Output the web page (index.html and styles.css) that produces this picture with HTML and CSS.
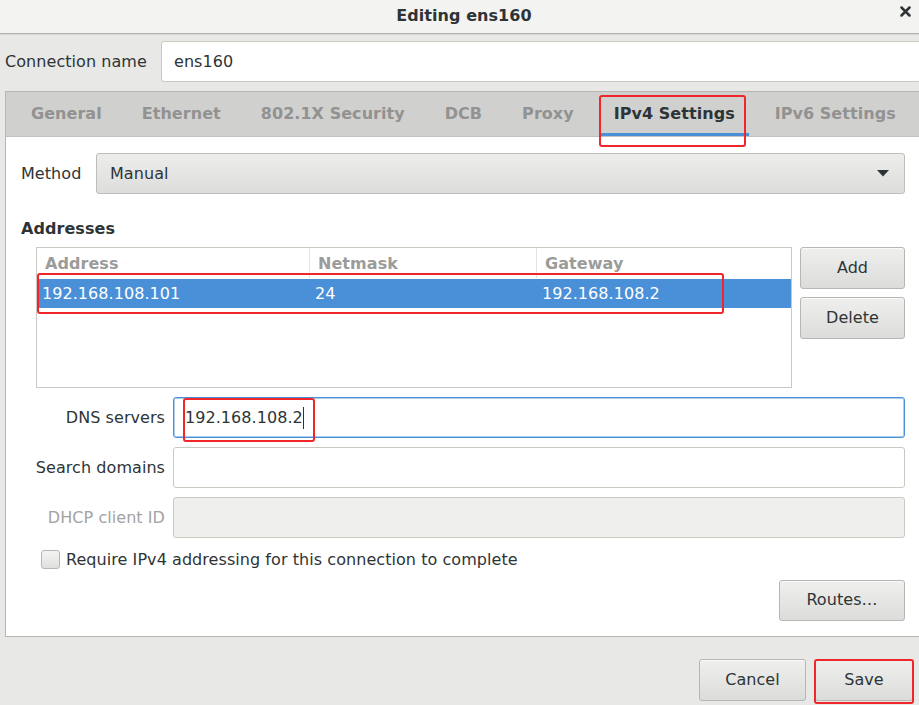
FILE: index.html
```html
<!DOCTYPE html>
<html lang="en">
<head>
  <meta charset="UTF-8">
  <title>Editing ens160</title>
  <link rel="stylesheet" href="styles.css">
</head>
<body>
  <div class="titlebar">
    <span class="title">Editing ens160</span>
    <svg class="close" width="11" height="11" viewBox="0 0 11 11">
      <path d="M1.5 1.5 L9.5 9.5 M9.5 1.5 L1.5 9.5" stroke="#2e3436" stroke-width="2.5" stroke-linecap="round"/>
    </svg>
  </div>

  <div class="dialog">
    <div class="namerow">
      <span class="label">Connection name</span>
      <div class="entry name-entry">ens160</div>
    </div>

    <div class="notebook">
      <div class="tabs">
        <span class="tab">General</span>
        <span class="tab">Ethernet</span>
        <span class="tab">802.1X Security</span>
        <span class="tab">DCB</span>
        <span class="tab">Proxy</span>
        <span class="tab active">IPv4 Settings</span>
        <span class="tab">IPv6 Settings</span>
      </div>

      <div class="page">
        <div class="method-row">
          <span class="label">Method</span>
          <div class="combo">
            <span>Manual</span>
            <svg width="12" height="7" viewBox="0 0 12 7"><path d="M0 0 L12 0 L6 6.5 Z" fill="#2e3436"/></svg>
          </div>
        </div>

        <div class="section-title">Addresses</div>

        <div class="addr-row">
          <div class="addr-table">
            <div class="thead">
              <span class="col c1">Address</span>
              <span class="col c2">Netmask</span>
              <span class="col c3">Gateway</span>
            </div>
            <div class="trow selected">
              <span class="col c1">192.168.108.101</span>
              <span class="col c2">24</span>
              <span class="col c3">192.168.108.2</span>
            </div>
          </div>
          <div class="addr-buttons">
            <button class="btn">Add</button>
            <button class="btn">Delete</button>
          </div>
        </div>

        <div class="fields">
          <span class="label">DNS servers</span>
          <div class="entry focused">192.168.108.2<span class="caret"></span></div>
          <span class="label">Search domains</span>
          <div class="entry"></div>
          <span class="label disabled">DHCP client ID</span>
          <div class="entry off"></div>
        </div>

        <div class="check">
          <span class="box"></span>
          <span>Require IPv4 addressing for this connection to complete</span>
        </div>

        <div class="routes-row">
          <button class="btn routes">Routes…</button>
        </div>
      </div>
    </div>

    <div class="footer">
      <button class="btn cancel">Cancel</button>
      <button class="btn save">Save</button>
    </div>
  </div>

  <!-- red annotation boxes drawn over the screenshot -->
  <div class="mark mark-tab"></div>
  <div class="mark mark-row"></div>
  <div class="mark mark-dns"></div>
  <div class="mark mark-save"></div>
</body>
</html>
```

FILE: styles.css
```css
* {
  box-sizing: border-box;
}
html, body {
  margin: 0;
  width: 919px;
  height: 705px;
  overflow: hidden;
}
body {
  position: relative;
  background: #e8e8e7;
  font-family: "DejaVu Sans", "Liberation Sans", sans-serif;
  font-size: 16px;
  letter-spacing: 0.06px;
  color: #2e3436;
}

.titlebar {
  height: 34px;
  background: #f3f3f2;
  border-bottom: 1px solid #b4b4b2;
  box-shadow: 0 1px 0 #d6d6d4;
  display: flex;
  align-items: center;
  justify-content: center;
  padding-left: 9px;
  position: relative;
}
.title {
  font-weight: bold;
  margin-top: -2px;
}
.close {
  position: absolute;
  left: 900px;
  top: 6px;
}

.dialog {
  width: 921px;
}

.namerow {
  display: flex;
  align-items: center;
  margin-top: 7px;
  padding-left: 5px;
}
.namerow .label {
  width: 156px;
}
.entry {
  height: 41px;
  flex: 1;
  background: #fff;
  border: 1px solid #cdc7c2;
  border-radius: 3px;
  display: flex;
  align-items: center;
  padding-left: 11px;
}
.name-entry {
  padding-left: 12px;
}
.entry.focused {
  border-color: #4a90d9;
  box-shadow: inset 0 0 0 1px rgba(74,144,217,0.45);
}
.entry.off {
  background: #efefee;
}
.caret {
  display: inline-block;
  width: 1px;
  height: 22px;
  background: #2e3436;
}

.notebook {
  margin: 9px 0 0 5px;
  border: 1px solid #b6b6b3;
}
.tabs {
  height: 45px;
  background: #d0d0cf;
  border-bottom: 1px solid #c0c0be;
  display: flex;
  padding-left: 5px;
  overflow: hidden;
}
.tab {
  flex-shrink: 0;
  white-space: nowrap;
  margin: 0 6px;
  padding: 0 14px;
  display: flex;
  align-items: center;
  font-weight: bold;
  letter-spacing: 0.05px;
  color: #929291;
  border-bottom: 3px solid transparent;
  padding-top: 2px;
}
.tab.active {
  color: #2e3436;
  border-bottom-color: #4a90d9;
}

.page {
  background: #fff;
  padding: 16px 15px 15px 15px;
}

.method-row {
  display: flex;
  align-items: center;
}
.method-row .label {
  width: 75px;
}
.combo {
  flex: 1;
  height: 41px;
  border: 1px solid #bdbdba;
  border-radius: 3px;
  background: linear-gradient(#ededec, #dddddb);
  display: flex;
  align-items: center;
  justify-content: space-between;
  padding: 0 15px 0 13px;
}

.section-title {
  font-weight: bold;
  line-height: 20px;
  margin-top: 25px;
}

.addr-row {
  display: flex;
  margin-top: 8px;
  padding-left: 15px;
  gap: 8px;
}
.addr-table {
  width: 756px;
  height: 141px;
  border: 1px solid #cdc7c2;
}
.thead {
  display: flex;
  height: 30px;
  font-weight: bold;
  color: #9b9b9a;
}
.thead .col {
  padding-left: 8px;
  display: flex;
  align-items: center;
  border-right: 1px solid #e4e4e2;
}
.thead .c3 {
  border-right: none;
}
.trow {
  display: flex;
  height: 29px;
  margin-top: 1px;
}
.trow .col {
  padding-left: 5px;
  display: flex;
  align-items: center;
}
.trow.selected {
  background: #4a90d9;
  color: #fff;
}
.c1 {
  width: 273px;
}
.c2 {
  width: 227px;
}
.c3 {
  flex: 1;
}

.addr-buttons {
  flex: 1;
  display: flex;
  flex-direction: column;
  gap: 8px;
}
.btn {
  font-family: inherit;
  font-size: 16px;
  letter-spacing: 0.06px;
  color: #2e3436;
  height: 42px;
  border: 1px solid #b6b6b3;
  border-radius: 3px;
  background: linear-gradient(#efefee, #dcdcda);
  box-shadow: inset 0 1px 0 #fafafa;
  padding: 0 0 2px 0;
}

.fields {
  display: grid;
  grid-template-columns: 144px 1fr;
  column-gap: 8px;
  row-gap: 9px;
  margin-top: 9px;
  align-items: center;
}
.fields .label {
  text-align: right;
}
.fields .label.disabled {
  color: #a3a3a2;
}

.check {
  display: flex;
  align-items: center;
  margin-top: 11px;
  padding-left: 20px;
  height: 20px;
}
.box {
  width: 19px;
  height: 19px;
  border: 1px solid #b6b6b3;
  border-radius: 3px;
  background: linear-gradient(#f4f4f3, #e0e0de);
  margin-right: 6px;
}

.routes-row {
  display: flex;
  justify-content: flex-end;
  margin-top: 11px;
}
.routes {
  width: 126px;
  height: 41px;
}

.footer {
  display: flex;
  justify-content: flex-end;
  gap: 9px;
  margin-top: 22px;
  padding-right: 8px;
}
.cancel {
  width: 107px;
}
.save {
  width: 98px;
}

.mark {
  position: absolute;
  border: 2px solid #f0262b;
  border-radius: 3px;
}
.mark-tab {
  left: 599px;
  top: 95px;
  width: 147px;
  height: 52px;
}
.mark-row {
  left: 37px;
  top: 273px;
  width: 687px;
  height: 41px;
}
.mark-dns {
  left: 183px;
  top: 398px;
  width: 132px;
  height: 44px;
}
.mark-save {
  left: 814px;
  top: 659px;
  width: 100px;
  height: 45px;
}
```
